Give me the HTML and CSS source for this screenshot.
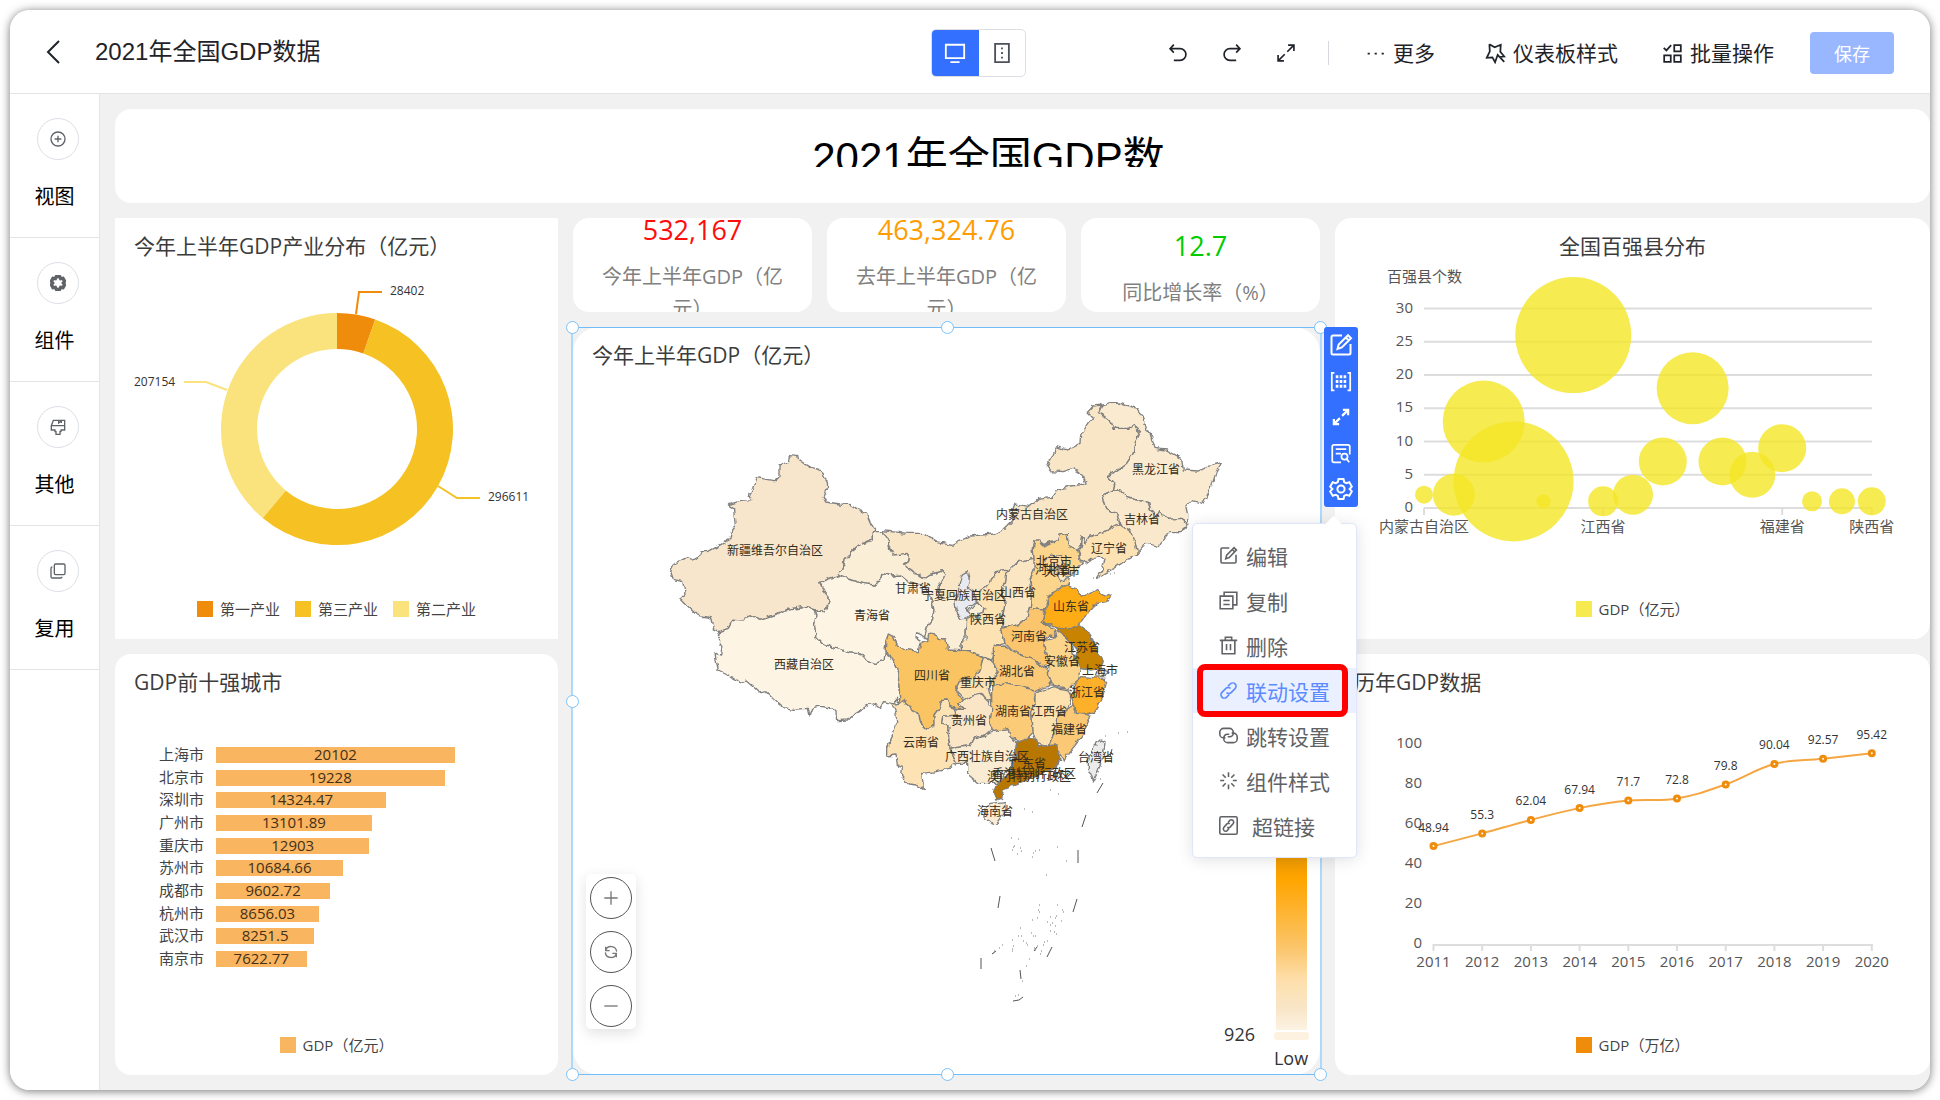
FILE: index.html
```html
<!DOCTYPE html>
<html lang="zh-CN">
	<head>
		<meta charset="UTF-8" />
		<meta name="viewport" content="width=device-width, initial-scale=1.0" />
		<title>2021年全国GDP数据</title>
		<link rel="stylesheet" href="styles.css">
	</head>
	<body>
		<svg class="sprite" aria-hidden="true">
			<symbol id="i-edit" viewBox="0 0 24 24"><path d="M13 2.500H4A1.500 1.500 0 0 0 2.500 4v16A1.500 1.500 0 0 0 4 21.500h16a1.500 1.500 0 0 0 1.500-1.500v-9M8.500 16l1.200-4.500L19 2.200l3 3L12.800 14.500zM16.800 4.500l3 3" /></symbol>
			<symbol id="i-expand" viewBox="0 0 24 24"><path d="M14.500 2.500h7v7M21.500 2.500l-8 8M9.500 21.500h-7v-7M2.500 21.500l8-8" /></symbol>
			<symbol id="i-gear" viewBox="0 0 24 24"><path d="M9.500 2h5l.7 3 2.100 1.200 3-.9 2.500 4.300L20.600 12l2.200 2.400-2.500 4.300-3-.9-2.100 1.200-.7 3h-5l-.7-3-2.100-1.200-3 .9-2.500-4.300L3.400 12 1.200 9.600l2.500-4.300 3 .9L8.800 5z" /><circle cx="12" cy="12" r="3.600" /></symbol>
			<symbol id="i-link" viewBox="0 0 24 24"><path d="M9.500 14.500a4 4 0 0 0 5.800.2l5-5a4.200 4.200 0 0 0-6-6L11 7M14.500 9.500a4 4 0 0 0-5.800-.2l-5 5a4.200 4.200 0 0 0 6 6L13 17" /></symbol>
		</svg>

		<div class="app">
			<header class="topbar">
				<button class="icon-btn back" aria-label="返回">
					<svg viewBox="0 0 24 24"><path d="M18 1L7 12l11 11" /></svg>
				</button>
				<h1>2021年全国GDP数据</h1>
				<div class="device">
					<button class="active" aria-label="电脑端">
						<svg viewBox="0 0 24 24"><path d="M2 3h20v14.500H2zM7 22h10" /></svg>
					</button>
					<button aria-label="移动端">
						<svg viewBox="0 0 24 24"><path d="M4.500 2h15v20h-15z" /><path d="M11 7h2M11 12h2M11 17h2" /></svg>
					</button>
				</div>
				<div class="tools">
					<button class="icon-btn" aria-label="撤销">
						<svg viewBox="0 0 24 24"><path d="M7 2L2.500 6.800 7 11.500M3 6.800h11.500a7 7 0 0 1 0 14H7" /></svg>
					</button>
					<button class="icon-btn" aria-label="重做">
						<svg viewBox="0 0 24 24"><path d="M17 2l4.500 4.800L17 11.500M21 6.800H9.500a7 7 0 0 0 0 14H17" /></svg>
					</button>
					<button class="icon-btn" aria-label="全屏"><svg><use href="#i-expand" /></svg></button>
					<span class="divider"></span>
					<button class="text-btn more">
						<svg viewBox="0 0 24 24"><path d="M3 12h2.500M11 12h2.500M19 12h2.500" /></svg>更多
					</button>
					<button class="text-btn">
						<svg viewBox="0 0 24 24"><path d="M5 1.500l6 3.500 7-3-.5 8 4.500 5.500-6 .5M5 1.500l.5 8L2 17l6.500-.5 3 5.500 3-8.500 7.500 8" /></svg>仪表板样式
					</button>
					<button class="text-btn">
						<svg viewBox="0 0 24 24"><path d="M2 5.500l3 3 5.500-6M14 2.500h7.500v7H14zM2.500 14H10v7.500H2.500zM14 14h7.500v7.500H14z" /></svg>批量操作
					</button>
					<button class="save" disabled>保存</button>
				</div>
			</header>

			<div class="main">
				<nav class="sidebar">
					<button>
						<span class="round"><svg viewBox="0 0 24 24"><circle cx="12" cy="12" r="10.500" /><path d="M12 7v10M7 12h10" /></svg></span>
						视图
					</button>
					<button>
						<span class="round bold"><svg viewBox="0 0 24 24"><path d="M8 5.500l1.500-3h5l1.500 3 3.500-.5 2.500 4.500-2 2.500 2 2.500-2.500 4.500-3.500-.5-1.500 3h-5l-1.500-3-3.500.5L2 14.500 4 12 2 9.500 4.500 5z" /></svg></span>
						组件
					</button>
					<button>
						<span class="round"><svg viewBox="0 0 24 24"><path d="M5 2h17v8H2zM2 10v6.500h5.500V19H9v4h6v-4h1.500v-2.500H22V10M13 2v4l4-3v3" /></svg></span>
						其他
					</button>
					<button>
						<span class="round"><svg viewBox="0 0 24 24"><rect x="6.500" y="1.500" width="16" height="16" rx="2" /><path d="M3.500 6a2 2 0 0 0-2 2v12.500a2 2 0 0 0 2 2H16a2 2 0 0 0 2-2" /></svg></span>
						复用
					</button>
				</nav>

				<main class="board">
					<section class="card banner"><p>2021年全国GDP数据</p></section>

					<section class="card pie square">
						<h2>今年上半年GDP产业分布（亿元）</h2>
						<svg class="chart" viewBox="0 0 443 336">
							<g id="pieSlices"></g>
							<g class="pie-label">
								<path stroke="#f08c0c" d="M241 52l3-22h23" />
								<path stroke="#f5c123" d="M323 224l19 12h23" />
								<path stroke="#fae27d" d="M112 128l-21-8H69" />
								<text x="275" y="28">28402</text>
								<text x="373" y="234">296611</text>
								<text x="19" y="119">207154</text>
							</g>
						</svg>
						<ul class="legend">
							<li class="c-orange">第一产业</li>
							<li class="c-gold">第三产业</li>
							<li class="c-cream">第二产业</li>
						</ul>
					</section>

					<div class="kpis">
						<section class="card kpi"><strong class="red">532,167</strong><span>今年上半年GDP（亿元）</span></section>
						<section class="card kpi"><strong class="orange">463,324.76</strong><span>去年上半年GDP（亿元）</span></section>
						<section class="card kpi"><strong class="green">12.7</strong><span>同比增长率（%）</span></section>
					</div>

					<section class="card bubble">
						<h2 class="center">全国百强县分布</h2>
						<svg class="chart" id="bubbleChart" viewBox="0 0 595 336"></svg>
						<ul class="legend"><li class="c-yellow">GDP（亿元）</li></ul>
					</section>

					<section class="card map">
						<h2>今年上半年GDP（亿元）</h2>
						<svg class="chart" viewBox="573 371 747 704">
							<defs>
								<filter id="coast" x="0" y="0" width="1" height="1">
									<feTurbulence type="fractalNoise" baseFrequency="0.14" numOctaves="2" seed="4" />
									<feDisplacementMap in="SourceGraphic" scale="6" xChannelSelector="R" yChannelSelector="G" />
								</filter>
								<linearGradient id="ramp" x1="0" y1="0" x2="0" y2="1">
									<stop offset="0" stop-color="#b87700" />
									<stop offset=".4" stop-color="#ffa500" />
									<stop offset=".67" stop-color="#fbc56a" />
									<stop offset=".8" stop-color="#fedfab" />
									<stop offset=".92" stop-color="#f8e6c9" />
									<stop offset="1" stop-color="#fcf3e3" />
								</linearGradient>
							</defs>
							<!-- provinces, drawn at 3x -->
							<g class="land" filter="url(#coast)"><g transform="translate(660 380) scale(.33333)">
								<path fill="#f7e6cb" d="M388 224L413 226 416 240 430 250 450 262 478 268 490 282 502 305 503 325 492 350 500 366 540 372 572 374 600 392 620 402 632 430 647 452 640 460 640 480 605 492 575 515 570 528 553 533 550 555 537 585 500 598 480 608 495 640 508 655 500 680 505 690 465 690 430 680 372 690 350 702 300 718 275 708 250 720 215 718 205 745 180 755 160 745 152 714 110 705 80 675 60 655 75 640 68 605 40 598 32 575 45 550 80 533 98 540 115 530 120 515 145 515 210 478 215 450 226 435 220 385 205 375 240 364 275 362 268 350 288 293 345 302 357 292 357 255 385 245z" />
								<path fill="#fdf4e4" d="M180 755L205 745 215 718 250 720 275 708 300 718 350 702 372 690 430 680 463 690 468 705 464 735 468 770 490 795 530 805 570 818 605 822 620 840 645 850 672 842 675 820 690 825 710 860 716 900 718 940 720 970 706 952 708 972 695 970 675 965 665 985 630 972 585 1000 565 1020 530 1022 528 995 515 985 480 978 455 985 447 1008 442 985 400 988 368 982 345 962 318 935 300 938 255 900 238 908 205 885 175 870 168 840 165 820 182 825 186 800 172 780z" />
								<path fill="#fef4e3" d="M480 608L500 598 552 583 565 597 590 605 610 610 645 615 660 605 665 580 700 588 720 585 745 605 780 612 805 640 815 660 822 690 818 715 800 740 803 765 795 770 770 758 768 770 790 785 775 815 735 808 712 795 700 770 685 765 678 780 675 820 672 842 645 850 620 840 605 822 570 818 530 805 490 795 468 770 464 735 468 705 463 690 497 692 503 680 508 655 495 640z" />
								<path fill="#f8e6c6" d="M668 452L740 460 790 460 830 485 878 493 930 468 1000 462 1030 450 1060 420 1055 395 1065 372 1110 380 1135 358 1175 352 1190 330 1230 318 1278 312 1270 285 1240 265 1210 275 1170 272 1162 262 1190 200 1220 210 1260 190 1262 165 1285 130 1300 115 1282 97 1300 78 1325 75 1315 97 1335 108 1350 120 1360 145 1405 145 1420 135 1442 155 1425 190 1420 220 1400 250 1345 290 1365 310 1360 330 1328 345 1340 385 1370 400 1380 432 1340 452 1290 470 1275 490 1265 468 1262 495 1252 515 1225 500 1220 462 1195 478 1140 492 1125 480 1120 510 1122 535 1075 545 1050 570 1010 575 980 620 950 650 900 650 850 660 832 640 835 618 855 585 850 572 810 583 790 598 760 575 730 555 745 545 748 525 700 525 685 485z" />
								<path fill="#fbeed6" d="M537 585L550 555 553 533 570 528 575 515 605 492 640 480 640 460 647 452 668 452 685 485 690 510 700 525 745 520 748 530 745 545 730 555 760 575 790 598 810 583 850 572 855 585 850 600 835 618 832 640 850 655 888 645 888 690 905 715 950 665 975 685 972 700 920 712 918 760 902 785 905 812 885 815 862 810 855 780 835 778 815 760 803 775 790 770 800 740 818 715 822 690 815 660 805 640 780 612 745 605 720 585 700 588 665 580 660 605 645 615 610 610 590 605 565 597z" />
								<path fill="#f9ead0" d="M1325 75L1350 68 1375 66 1400 75 1430 85 1450 110 1460 145 1475 170 1485 205 1520 210 1565 235 1570 270 1615 273 1640 260 1685 248 1670 270 1655 320 1630 370 1595 362 1578 380 1583 405 1583 430 1560 415 1520 418 1500 395 1490 412 1470 385 1465 368 1430 360 1395 352 1380 330 1360 330 1365 310 1345 290 1400 250 1420 220 1425 190 1442 155 1420 135 1405 145 1360 145 1350 120 1335 108 1315 97z" />
								<path fill="#f9e8cc" d="M1328 345L1360 330 1380 330 1395 352 1430 360 1465 368 1470 385 1490 412 1500 395 1520 418 1560 415 1583 430 1575 445 1560 455 1530 455 1500 490 1495 500 1460 490 1432 520 1415 455 1380 432 1370 400 1340 385z" />
								<path fill="#fde2b4" d="M1265 468L1275 490 1290 470 1340 452 1380 432 1415 455 1425 485 1432 520 1400 540 1370 560 1335 580 1310 595 1325 570 1335 540 1320 528 1300 535 1280 550 1265 540 1255 515 1262 495z" />
								<path fill="#fcd58d" d="M1122 535L1120 510 1125 480 1140 480 1145 495 1195 478 1200 465 1222 460 1225 500 1252 510 1260 540 1270 550 1245 575 1225 590 1222 615 1190 625 1165 650 1155 690 1110 685 1115 640 1110 600 1122 570z" />
								<path fill="#fcd9a0" d="M1150 545L1175 525 1200 530 1210 550 1190 570 1160 565z" />
								<path fill="#fbe8c9" d="M1195 565L1210 575 1222 595 1205 602 1195 585z" />
								<path fill="#fbe6c4" d="M1040 580L1050 570 1075 545 1122 535 1122 570 1108 600 1115 640 1110 690 1105 715 1060 735 1025 742 1030 700 1035 660 1025 640 1035 610z" />
								<path fill="#fde2b4" d="M980 620L1010 575 1043 570 1035 610 1025 640 1035 670 1028 700 1025 742 1035 790 1000 800 1005 820 995 840 965 830 930 812 905 812 902 785 918 780 920 715 972 700 975 685 950 665 945 640z" />
								<path fill="#e9eaef" d="M905 585L922 575 928 600 922 625 945 635 945 665 920 685 930 705 905 715 888 695 885 660 900 640 898 610z" />
								<path fill="#fac56c" d="M1110 685L1155 690 1145 725 1185 750 1190 768 1170 765 1150 780 1155 810 1170 845 1150 858 1110 835 1055 810 1035 790 1025 745 1080 730 1105 710z" />
								<path fill="#fbca78" d="M1000 800L1035 798 1055 815 1110 835 1150 858 1165 875 1172 915 1125 935 1085 920 1040 908 995 922 1000 895 1015 875 1000 840z" />
								<path fill="#fde2b4" d="M970 835L995 840 1015 875 1000 895 985 922 995 960 980 965 968 945 940 950 915 960 895 940 890 920 900 900 940 890 960 860z" />
								<path fill="#fac463" d="M685 762L700 770 712 795 735 808 775 815 780 790 803 785 805 765 822 760 835 778 858 780 862 810 905 812 930 812 970 835 960 870 940 895 900 900 890 920 892 945 912 962 895 970 912 985 900 990 870 980 858 960 845 962 840 980 822 1005 822 1040 800 1048 785 1035 775 1000 750 985 735 958 720 970 716 900 710 860 690 825 675 815 678 785z" />
								<path fill="#fde2b4" d="M695 970L708 972 720 970 735 958 750 985 775 1000 785 1035 800 1048 822 1040 822 1005 840 980 845 962 858 960 870 980 880 985 885 1005 848 1010 845 1030 868 1035 860 1060 872 1095 880 1130 890 1150 865 1168 830 1175 785 1180 790 1225 770 1215 745 1212 725 1190 727 1160 712 1155 708 1125 680 1128 680 1100 700 1060 710 1030 708 1000z" />
								<path fill="#fae6c6" d="M895 970L912 962 940 945 960 940 985 965 993 975 997 1000 990 1020 998 1045 975 1065 940 1075 930 1095 890 1100 870 1105 865 1060 868 1035 845 1030 848 1010 885 1005 885 985 912 985z" />
								<path fill="#faecd2" d="M870 1105L890 1100 930 1095 940 1075 975 1065 1020 1048 1045 1045 1050 1070 1070 1090 1060 1140 1030 1190 1010 1210 955 1210 920 1180 920 1150 890 1150 880 1130z" />
								<path fill="#fbcb78" d="M995 922L1040 908 1085 920 1120 930 1125 970 1115 1000 1120 1060 1105 1075 1075 1085 1050 1070 1045 1045 1000 1055 990 1030 995 990z" />
								<path fill="#fde2b0" d="M1125 940L1180 920 1225 930 1235 950 1225 980 1190 1015 1185 1060 1165 1100 1130 1090 1120 1060 1115 1000 1125 970z" />
								<path fill="#fcd58d" d="M1185 750L1210 765 1230 780 1240 820 1265 865 1255 900 1225 925 1175 915 1165 875 1170 845 1155 810 1150 780 1190 770z" />
								<path fill="#c88300" d="M1185 738L1255 735 1290 760 1305 800 1330 845 1325 865 1290 870 1260 865 1245 825 1250 810 1225 780 1205 760z" />
								<path fill="#feac18" d="M1220 618L1250 625 1265 650 1280 648 1305 630 1350 650 1340 665 1310 670 1290 690 1270 720 1255 735 1225 748 1185 742 1145 725 1160 690 1165 650 1190 630z" />
								<path fill="#fdb02a" d="M1265 890L1330 895 1340 905 1325 960 1300 1000 1250 1000 1235 950 1245 910z" />
								<path fill="#fdefd8" d="M1315 865L1345 875 1335 890 1315 888z" />
								<path fill="#fbc974" d="M1240 975L1250 1000 1290 1005 1275 1050 1250 1090 1210 1140 1198 1110 1170 1095 1185 1060 1190 1015 1225 985z" />
								<path fill="#b87700" d="M1070 1090L1095 1075 1130 1078 1135 1100 1190 1095 1200 1135 1185 1165 1140 1185 1090 1205 1030 1230 1025 1255 1010 1260 1002 1230 1010 1210 1040 1190 1065 1140z" />
								<path fill="#fbedd5" d="M990 1270L1035 1265 1035 1295 1005 1335 975 1315 975 1290z" />
								<path fill="#ebebeb" d="M1320 1080L1335 1085 1330 1125 1315 1170 1300 1200 1285 1170 1285 1140 1300 1100z" />
							</g></g>
							<path class="dashes" d="M1103 783l-6 10M1112 749l-2 8M1086 815l-4 12M991 848l4 13M1078 850v13M1000 896l-2 12M1077 899l-4 13M1052 947l-5 10M981 958v11M1013 1001l6-1 4-3M1020 970l1 9M992 954l4-3M1034 951l3-4" />
							<path class="islets" d="M1024 809h1M1032 812h1M1050 790h1M1058 794h1M1118 733h1M1127 732h1M1105 736h1M1100 779h1M1093 578h1M1110 574h1M1114 573h1M1011 838h1M1018 839h1M1013 847h1M1012 850h1M1014 846h1M1020 848h1M1021 851h1M1017 854h1M1033 853h1M1035 851h1M1039 850h1M1032 857h1M1057 847h1M1066 861h1M1046 875h1M1039 905h1M1057 905h1M1063 912h1M1062 910h1M1039 912h1M1038 910h1M1032 920h1M1037 918h1M1050 917h1M1055 918h1M1056 916h1M1061 921h1M1050 925h1M1047 922h1M1055 926h1M1052 923h1M1020 928h1M1031 933h1M1033 936h1M1035 936h1M1056 934h1M1050 931h1M1054 932h1M1018 936h1M1021 936h1M1012 940h1M1002 945h1M999 948h1M994 951h1M993 953h1M1012 949h1M1013 946h1M1012 951h1M1027 945h1M1026 943h1M1023 941h1M1035 950h1M1034 948h1M1037 946h1M1043 945h1M1044 942h1M1047 941h1M1040 954h1M1041 951h1M1029 959h1M1026 966h1M1020 972h1M1022 981h1M1015 996h1M1018 995h1" />
							<g class="place" id="places"></g>
							<g class="ramp">
								<rect x="1276" y="780" width="31" height="250" fill="url(#ramp)" />
								<rect x="1274" y="1032" width="35" height="8" rx="3" fill="#fcf2df" />
								<text x="1255" y="1034" text-anchor="end">926</text>
								<text x="1291" y="1058" text-anchor="middle">Low</text>
							</g>
						</svg>
						<div class="zoom">
							<button aria-label="放大"><svg viewBox="0 0 24 24"><path d="M12 2v20M2 12h20" /></svg></button>
							<button aria-label="重置"><svg viewBox="0 0 24 24"><path d="M4 9.500A8.500 8.500 0 0 1 20.500 11.500M4 4v6h6M20 14.500A8.500 8.500 0 0 1 3.500 12.500M20 20v-6h-6" /></svg></button>
							<button aria-label="缩小"><svg viewBox="0 0 24 24"><path d="M2 12h20" /></svg></button>
						</div>

						<div class="selection">
							<i class="n w"></i><i class="n"></i><i class="n e"></i>
							<i class="w"></i><i class="e"></i>
							<i class="s w"></i><i class="s"></i><i class="s e"></i>
						</div>

						<div class="side-tools">
							<button aria-label="编辑"><svg class="big"><use href="#i-edit" /></svg></button>
							<button aria-label="明细"><svg viewBox="0 0 24 24"><path d="M4.500 2H1.500v20h3M19.500 2h3v20h-3" /><path d="M6 6.500h12M6 12h12M6 17.500h12" stroke-width="3.500" stroke-dasharray="3 1.500" /></svg></button>
							<button aria-label="放大查看"><svg class="small"><use href="#i-expand" /></svg></button>
							<button aria-label="查看数据"><svg viewBox="0 0 24 24"><path d="M22 13V4a2 2 0 0 0-2-2H4a2 2 0 0 0-2 2v16a2 2 0 0 0 2 2h8M6 7h12M6 12h6" /><circle cx="16" cy="15.500" r="3.500" /><path d="M18.500 18.500l3 3.500" /></svg></button>
							<button aria-label="更多设置"><svg class="big"><use href="#i-gear" /></svg></button>
						</div>

						<div class="menu">
							<button><svg><use href="#i-edit" /></svg>编辑</button>
							<button><svg viewBox="0 0 24 24"><path d="M1.500 6.500h16v16h-16zM6.500 6V1.500h16v16H18M5.500 12h8M5.500 17h8" /></svg>复制</button>
							<button><svg viewBox="0 0 24 24"><path d="M1 5.500h22M8 5V1.500h8V5M4 6v16.500h16V6M9.500 10v8M14.500 10v8" /></svg>删除</button>
							<button class="current"><svg><use href="#i-link" /></svg>联动设置</button>
							<button><svg viewBox="0 0 24 24"><path d="M8 15H6a5 5 0 0 1-5-5V8a5 5 0 0 1 5-5h7a5 5 0 0 1 5 5v1a4.500 4.500 0 0 1-4.500 4.500H11M16 9h2a5 5 0 0 1 5 5v2a5 5 0 0 1-5 5h-7a5 5 0 0 1-5-5v-1a4.500 4.500 0 0 1 4.500-4.500H13" /></svg>跳转设置</button>
							<button><svg viewBox="0 0 24 24"><path d="M12 1.500v6M12 17v6M1.500 12h5M17.500 12h5M4.500 4.500l4 4M19.500 4.500l-4 4M4.500 19.500l4-4M19.500 19.500l-4-4" /></svg>组件样式</button>
							<button class="wide"><svg viewBox="0 0 24 24"><rect x="1" y="1" width="22" height="22" rx="2" /><path d="M10.500 14a2.500 2.500 0 0 0 3.500 0l4-4.500a3 3 0 0 0-4-4.300l-2.500 2.600M13.500 10a2.500 2.500 0 0 0-3.500 0l-4 4.500a3 3 0 0 0 4 4.300l2.500-2.600" /></svg>超链接</button>
							<div class="highlight"></div>
						</div>
					</section>

					<section class="card cities">
						<h2>GDP前十强城市</h2>
						<div class="bar-area"><div class="bars" id="cityBars"></div></div>
						<ul class="legend"><li class="c-peach">GDP（亿元）</li></ul>
					</section>

					<section class="card years">
						<h2>历年GDP数据</h2>
						<svg class="chart" id="lineChart" viewBox="0 0 595 336"></svg>
						<ul class="legend"><li class="c-orange">GDP（万亿）</li></ul>
					</section>
				</main>
			</div>
		</div>

		<script src="script.js"></script>
	</body>
</html>
```

FILE: styles.css
```css
:root {
	--primary: #3370ff;
	--board: #f1f1f1;
	--line: #e4e4e6;
	--text: #1f2329;
	--chart-text: #555;
	--cjk: 'Noto Sans CJK SC';
}

* {
	box-sizing: border-box;
}

body {
	margin: 0;
	padding: 10px;
	background: #fff;
	color: var(--text);
	font-family: 'Open Sans', var(--cjk), sans-serif;
}

h1,
h2,
p,
ul {
	margin: 0;
	padding: 0;
	font-weight: 400;
}

button {
	margin: 0;
	padding: 0;
	border: 0;
	background: none;
	color: inherit;
	font: inherit;
	cursor: pointer;
}

svg {
	display: block;
	fill: none;
	stroke: currentColor;
	stroke-width: 2;
}

.sprite {
	position: absolute;
	width: 0;
	height: 0;
}

.app {
	display: flex;
	flex-direction: column;
	min-height: calc(100vh - 20px);
	border-radius: 20px;
	overflow: hidden;
	box-shadow: 0 1px 10px rgba(0, 0, 0, 0.55);
}

/* top bar */
.topbar {
	display: grid;
	grid-template-columns: 85px 836fr auto 868fr;
	align-items: center;
	height: 84px;
	padding-right: 36px;
	border-bottom: 1px solid var(--line);
	background: #fff;
}

.topbar h1 {
	font: 24px/32px 'Liberation Sans', var(--cjk), sans-serif;
}

.back {
	margin-left: 31px;
}

.back svg {
	width: 24px;
	height: 24px;
}

.device,
.tools {
	display: flex;
	margin-top: 3px;
}

.device {
	width: 95px;
	height: 48px;
	border: 1px solid #dcdee3;
	border-radius: 5px;
	overflow: hidden;
}

.device button {
	flex: 1;
	display: grid;
	place-items: center;
	color: #4c5058;
}

.device .active {
	background: var(--primary);
	color: #fff;
}

.device svg {
	width: 22px;
	height: 22px;
}

.tools {
	align-items: center;
	justify-content: flex-end;
	min-width: 0;
	font-size: 21px;
	white-space: nowrap;
}

.tools svg {
	width: 20px;
	height: 20px;
}

.tools .text-btn svg {
	width: 21px;
	height: 21px;
}

.icon-btn + .icon-btn {
	margin-left: 34px;
}

.divider {
	width: 1px;
	height: 24px;
	margin: 0 36px 0 32px;
	background: #d5d7dc;
}

.text-btn {
	display: flex;
	align-items: center;
	gap: 7px;
	margin-right: 44px;
	line-height: 32px;
}

.more {
	margin-right: 50px;
}

.save {
	width: 84px;
	height: 42px;
	margin-left: -8px;
	border-radius: 4px;
	background: #99b7ff;
	color: #fff;
	font-size: 18px;
}

/* side bar */
.main {
	flex: 1;
	display: flex;
}

.sidebar {
	flex: none;
	width: 90px;
	border-right: 1px solid var(--line);
	background: #fff;
}

.sidebar button {
	display: block;
	width: 100%;
	height: 144px;
	padding-bottom: 4px;
	border-bottom: 1px solid var(--line);
	color: #000;
	font-size: 20px;
	line-height: 24px;
	text-align: center;
}

.round {
	display: grid;
	place-items: center;
	width: 42px;
	height: 42px;
	margin: 0 auto 25px 27px;
	border: 1px solid #dcdfe6;
	border-radius: 50%;
	color: #5f6368;
}

.round svg {
	width: 16px;
	height: 16px;
}

.round.bold svg {
	stroke-width: 5;
}

/* board */
.board {
	flex: 1;
	display: grid;
	grid-template-columns: 443fr 747fr 595fr;
	grid-template-rows: 94px 94px minmax(312px, 312fr) minmax(421px, 421fr);
	grid-template-areas:
		'banner banner banner'
		'pie kpis bubble'
		'pie map bubble'
		'cities map years';
	gap: 15px;
	min-width: 0;
	padding: 15px 0 15px 15px;
	background: var(--board);
}

.card {
	display: flex;
	flex-direction: column;
	min-width: 0;
	min-height: 0;
	border-radius: 16px;
	background: #fff;
}

.card h2 {
	padding: 12px 19px 0;
	color: #3c3c3c;
	font-size: 21px;
	line-height: 32px;
}

.card h2.center {
	text-align: center;
}

.square {
	border-radius: 0;
}

.banner {
	grid-area: banner;
	padding: 19px 68px 0 0;
}

.banner p {
	width: 360px;
	height: 39px;
	margin: 0 auto;
	overflow: hidden;
	color: #000;
	font: 42px/60px 'Liberation Sans', var(--cjk), sans-serif;
	text-align: center;
}

.pie {
	grid-area: pie;
}

.bubble {
	grid-area: bubble;
}

.cities {
	grid-area: cities;
}

.years {
	grid-area: years;
}

/* key figures */
.kpis {
	grid-area: kpis;
	display: grid;
	grid-template-columns: repeat(3, 1fr);
	gap: 15px;
}

.kpi {
	justify-content: center;
	align-items: center;
	gap: 6px;
	padding: 0 15px;
	overflow: hidden;
	text-align: center;
}

.kpi strong {
	flex: none;
	font-size: 27px;
	font-weight: 400;
	line-height: 50px;
}

.kpi span {
	flex: none;
	width: 100%;
	color: #808080;
	font-size: 20px;
	line-height: 32px;
}

.red {
	color: #ff0d0d;
}

.orange {
	color: #ff9d00;
}

.green {
	color: #0c0;
}

/* charts */
.chart {
	flex: 1;
	width: 100%;
	min-height: 0;
	stroke: none;
}

.chart text {
	fill: var(--chart-text);
	font-size: 15px;
	dominant-baseline: central;
}

.chart .pie-label text,
.chart .value {
	fill: #333;
	font-size: 12px;
}

.pie-label path {
	stroke-width: 2;
}

.legend {
	display: flex;
	justify-content: center;
	gap: 15px;
	padding-bottom: 19px;
	color: #444;
	font-size: 15px;
	line-height: 22px;
	list-style: none;
}

.legend li {
	display: flex;
	align-items: center;
	gap: 7px;
}

.legend li::before {
	content: '';
	width: 16px;
	height: 16px;
	background: var(--key);
}

.c-orange {
	--key: #f08c0c;
}

.c-gold {
	--key: #f5c123;
}

.c-cream {
	--key: #fae27d;
}

.c-yellow {
	--key: #f6ea50;
}

.c-peach {
	--key: #f9b55f;
}

.axis {
	stroke: #ddd;
	stroke-width: 2;
}

.dots circle {
	fill: #f4e626;
	fill-opacity: 0.8;
}

.trend {
	fill: none;
	stroke: #f5a640;
	stroke-width: 2;
}

.points circle {
	fill: #fff;
	stroke: #f08c0c;
	stroke-width: 3;
}

.bar-area {
	flex: 1;
	display: flex;
	align-items: center;
	padding: 0 103px 18px 44px;
}

.bars {
	display: grid;
	grid-auto-rows: 1fr;
	width: 100%;
	height: 227px;
	font-size: 15px;
}

.bar-row {
	display: grid;
	grid-template-columns: 45px 1fr;
	align-items: center;
	gap: 12px;
	color: #444;
	line-height: 14px;
}

.bar-row span,
.bar {
	height: 16px;
}

.bar {
	background: #f9b55f;
	color: #443018;
	text-align: center;
}

/* map */
.map {
	grid-area: map;
	position: relative;
	z-index: 1;
	border-radius: 26px;
}

.land path {
	stroke: #808080;
	stroke-width: 4;
	stroke-linejoin: round;
}

.dashes {
	fill: none;
	stroke: #555;
	stroke-width: 1;
}

.islets {
	stroke: #777;
	stroke-width: 1;
}

.chart .place text {
	fill: #332c20;
	font-size: 12px;
	text-anchor: middle;
}

.chart .ramp text {
	fill: #333;
	font-size: 18px;
}

.zoom {
	position: absolute;
	left: 13px;
	bottom: 46px;
	display: flex;
	flex-direction: column;
	gap: 12px;
	padding: 3px 4px 2px;
	border-radius: 5px;
	background: #fff;
	box-shadow: 0 4px 14px rgba(0, 0, 0, 0.12);
}

.zoom button {
	display: grid;
	place-items: center;
	width: 42px;
	height: 42px;
	border: 1px solid #555;
	border-radius: 50%;
	color: #777;
}

.zoom svg {
	width: 16px;
	height: 16px;
}

.selection {
	position: absolute;
	inset: 0 -2px;
	border: solid;
	border-width: 1px 2px;
	border-color: #70bdfa #acd9fc;
	pointer-events: none;
}

.selection i {
	position: absolute;
	top: calc(50% - 6px);
	left: calc(50% - 6px);
	width: 13px;
	height: 13px;
	border: 1px solid #7cc3fb;
	border-radius: 50%;
	background: #fff;
}

.selection .n {
	top: -7px;
}

.selection .s {
	top: auto;
	bottom: -7px;
}

.selection .w {
	left: -7px;
}

.selection .e {
	left: auto;
	right: -7px;
}

.side-tools {
	position: absolute;
	top: 0;
	left: calc(100% + 4px);
	width: 34px;
	border-radius: 3px;
	background: var(--primary);
	color: #fff;
}

.side-tools button {
	display: grid;
	place-items: center;
	width: 100%;
	height: 36px;
}

.side-tools svg {
	width: 22px;
	height: 21px;
}

.side-tools .big {
	width: 24px;
	height: 24px;
}

.side-tools .small {
	width: 18px;
	height: 18px;
	stroke-width: 3;
}

.menu {
	position: absolute;
	top: 196px;
	right: -37px;
	width: 165px;
	padding: 9px 0;
	border: 1px solid #dfe6fb;
	border-radius: 5px;
	background: #fff;
	box-shadow: 0 2px 16px rgba(0, 0, 0, 0.12);
}

.menu::before {
	content: '';
	position: absolute;
	top: -6px;
	right: 17px;
	width: 11px;
	height: 11px;
	background: #fff;
	transform: rotate(45deg);
}

.menu button {
	position: relative;
	display: flex;
	align-items: center;
	gap: 8px;
	width: 100%;
	height: 45px;
	padding-left: 26px;
	color: #606266;
	font-size: 21px;
}

.menu .wide {
	gap: 14px;
}

.menu .current {
	background: #eaf0ff;
	color: #5c8bff;
}

.menu svg {
	width: 19px;
	height: 19px;
}

.highlight {
	position: absolute;
	top: 140px;
	left: 4px;
	right: 8px;
	height: 53px;
	border: 6px solid #f00;
	border-radius: 8px;
}
```

FILE: script.js
```js
const ZERO_Y = 246; // y of the zero line in both axis charts

const industries = [
	{ value: 28402, color: '#f08c0c' },
	{ value: 296611, color: '#f5c123' },
	{ value: 207154, color: '#fae27d' },
];

const cities = [
	['上海市', 20102],
	['北京市', 19228],
	['深圳市', 14324.47],
	['广州市', 13101.89],
	['重庆市', 12903],
	['苏州市', 10684.66],
	['成都市', 9602.72],
	['杭州市', 8656.03],
	['武汉市', 8251.5],
	['南京市', 7622.77],
];

// [count, radius]
const counties = [
	[2, 9], [2, 21], [13, 41], [4, 60], [1, 7], [26, 58], [1, 15], [2, 20],
	[7, 24], [18, 36], [7, 24], [5, 23], [9, 24], [1, 10], [1, 13], [1, 14],
];
const countyNames = { 0: '内蒙古自治区', 6: '江西省', 12: '福建省', 15: '陕西省' };

const years = [48.94, 55.3, 62.04, 67.94, 71.7, 72.8, 79.8, 90.04, 92.57, 95.42];

const places = [
	['新疆维吾尔自治区', 775, 550], ['西藏自治区', 804, 664], ['青海省', 872, 615],
	['甘肃省', 913, 588], ['宁夏回族自治区', 964, 595], ['陕西省', 988, 619],
	['四川省', 932, 675], ['重庆市', 978, 682], ['贵州省', 969, 720],
	['云南省', 921, 742], ['广西壮族自治区', 987, 756], ['海南省', 995, 811],
	['内蒙古自治区', 1032, 514], ['黑龙江省', 1156, 469], ['吉林省', 1142, 519],
	['辽宁省', 1109, 548], ['北京市', 1054, 561], ['河北省', 1053, 569],
	['天津市', 1062, 571], ['山西省', 1018, 592], ['山东省', 1071, 606],
	['河南省', 1029, 636], ['江苏省', 1082, 647], ['安徽省', 1062, 661],
	['上海市', 1100, 670], ['湖北省', 1017, 671], ['浙江省', 1087, 692],
	['湖南省', 1013, 711], ['江西省', 1049, 711], ['福建省', 1069, 729],
	['广东省', 1028, 763], ['台湾省', 1096, 757], ['香港特别行政区', 1034, 773],
	['澳门特别行政区', 1029, 776],
];

function drawPie() {
	const total = industries.reduce((sum, d) => sum + d.value, 0);
	const cx = 222, cy = 167, outer = 116, inner = 80;
	let start = 0;
	const at = (r, a) => `${(cx + r * Math.sin(a)).toFixed(2)} ${(cy - r * Math.cos(a)).toFixed(2)}`;
	document.getElementById('pieSlices').innerHTML = industries.map((d) => {
		const end = start + (d.value / total) * Math.PI * 2;
		const large = end - start > Math.PI ? 1 : 0;
		const path = `M${at(outer, start)}A${outer} ${outer} 0 ${large} 1 ${at(outer, end)}L${at(inner, end)}A${inner} ${inner} 0 ${large} 0 ${at(inner, start)}z`;
		start = end;
		return `<path fill="${d.color}" d="${path}" />`;
	}).join('');
}

function drawCities() {
	const max = cities[0][1];
	document.getElementById('cityBars').innerHTML = cities.map(([name, value]) => `
		<div class="bar-row">
			<span>${name}</span>
			<div class="bar" style="width: ${((value / max) * 100).toFixed(2)}%">${value}</div>
		</div>
	`).join('');
}

function drawCounties() {
	const x = (i) => 89 + i * 29.85;
	const y = (v) => ZERO_Y - v * 6.65;
	let out = '<text x="52" y="14">百强县个数</text>';
	for (let v = 0; v <= 30; v += 5) {
		out += `<path class="axis" d="M89 ${y(v)}H537" /><text x="78" y="${y(v) - 2}" text-anchor="end">${v}</text>`;
	}
	Object.entries(countyNames).forEach(([i, name]) => {
		out += `<path class="axis" d="M${x(i)} ${ZERO_Y}v7" /><text x="${x(i)}" y="264" text-anchor="middle">${name}</text>`;
	});
	out += '<g class="dots">' + counties.map(([v, r], i) => `<circle cx="${x(i)}" cy="${y(v)}" r="${r}" />`).join('') + '</g>';
	document.getElementById('bubbleChart').innerHTML = out;
}

function drawYears() {
	const pts = years.map((v, i) => [98.5 + i * 48.7, ZERO_Y - v * 2]);
	let out = `<path class="axis" d="M98 ${ZERO_Y + 1}H538" />`;
	for (let v = 0; v <= 100; v += 20) {
		out += `<text x="87" y="${ZERO_Y - v * 2 - 2}" text-anchor="end">${v}</text>`;
	}
	let line = `M${pts[0]}`;
	for (let i = 1; i < pts.length; i++) {
		const a = pts[i - 2] || pts[i - 1], b = pts[i - 1], c = pts[i], d = pts[i + 1] || c;
		line += `C${b[0] + (c[0] - a[0]) / 5} ${b[1] + (c[1] - a[1]) / 5} ${c[0] - (d[0] - b[0]) / 5} ${c[1] - (d[1] - b[1]) / 5} ${c}`;
	}
	out += `<path class="trend" d="${line}" /><g class="points">`;
	out += pts.map(([px, py]) => `<circle cx="${px}" cy="${py}" r="2.5" />`).join('') + '</g>';
	pts.forEach(([px, py], i) => {
		out += `<path class="axis" d="M${px} ${ZERO_Y}v7" />`;
		out += `<text x="${px}" y="263" text-anchor="middle">${2011 + i}</text>`;
		out += `<text class="value" x="${px}" y="${py - 19}" text-anchor="middle">${years[i]}</text>`;
	});
	document.getElementById('lineChart').innerHTML = out;
}

document.getElementById('places').innerHTML = places
	.map(([name, px, py]) => `<text x="${px}" y="${py}">${name}</text>`).join('');

drawPie();
drawCities();
drawCounties();
drawYears();
```
